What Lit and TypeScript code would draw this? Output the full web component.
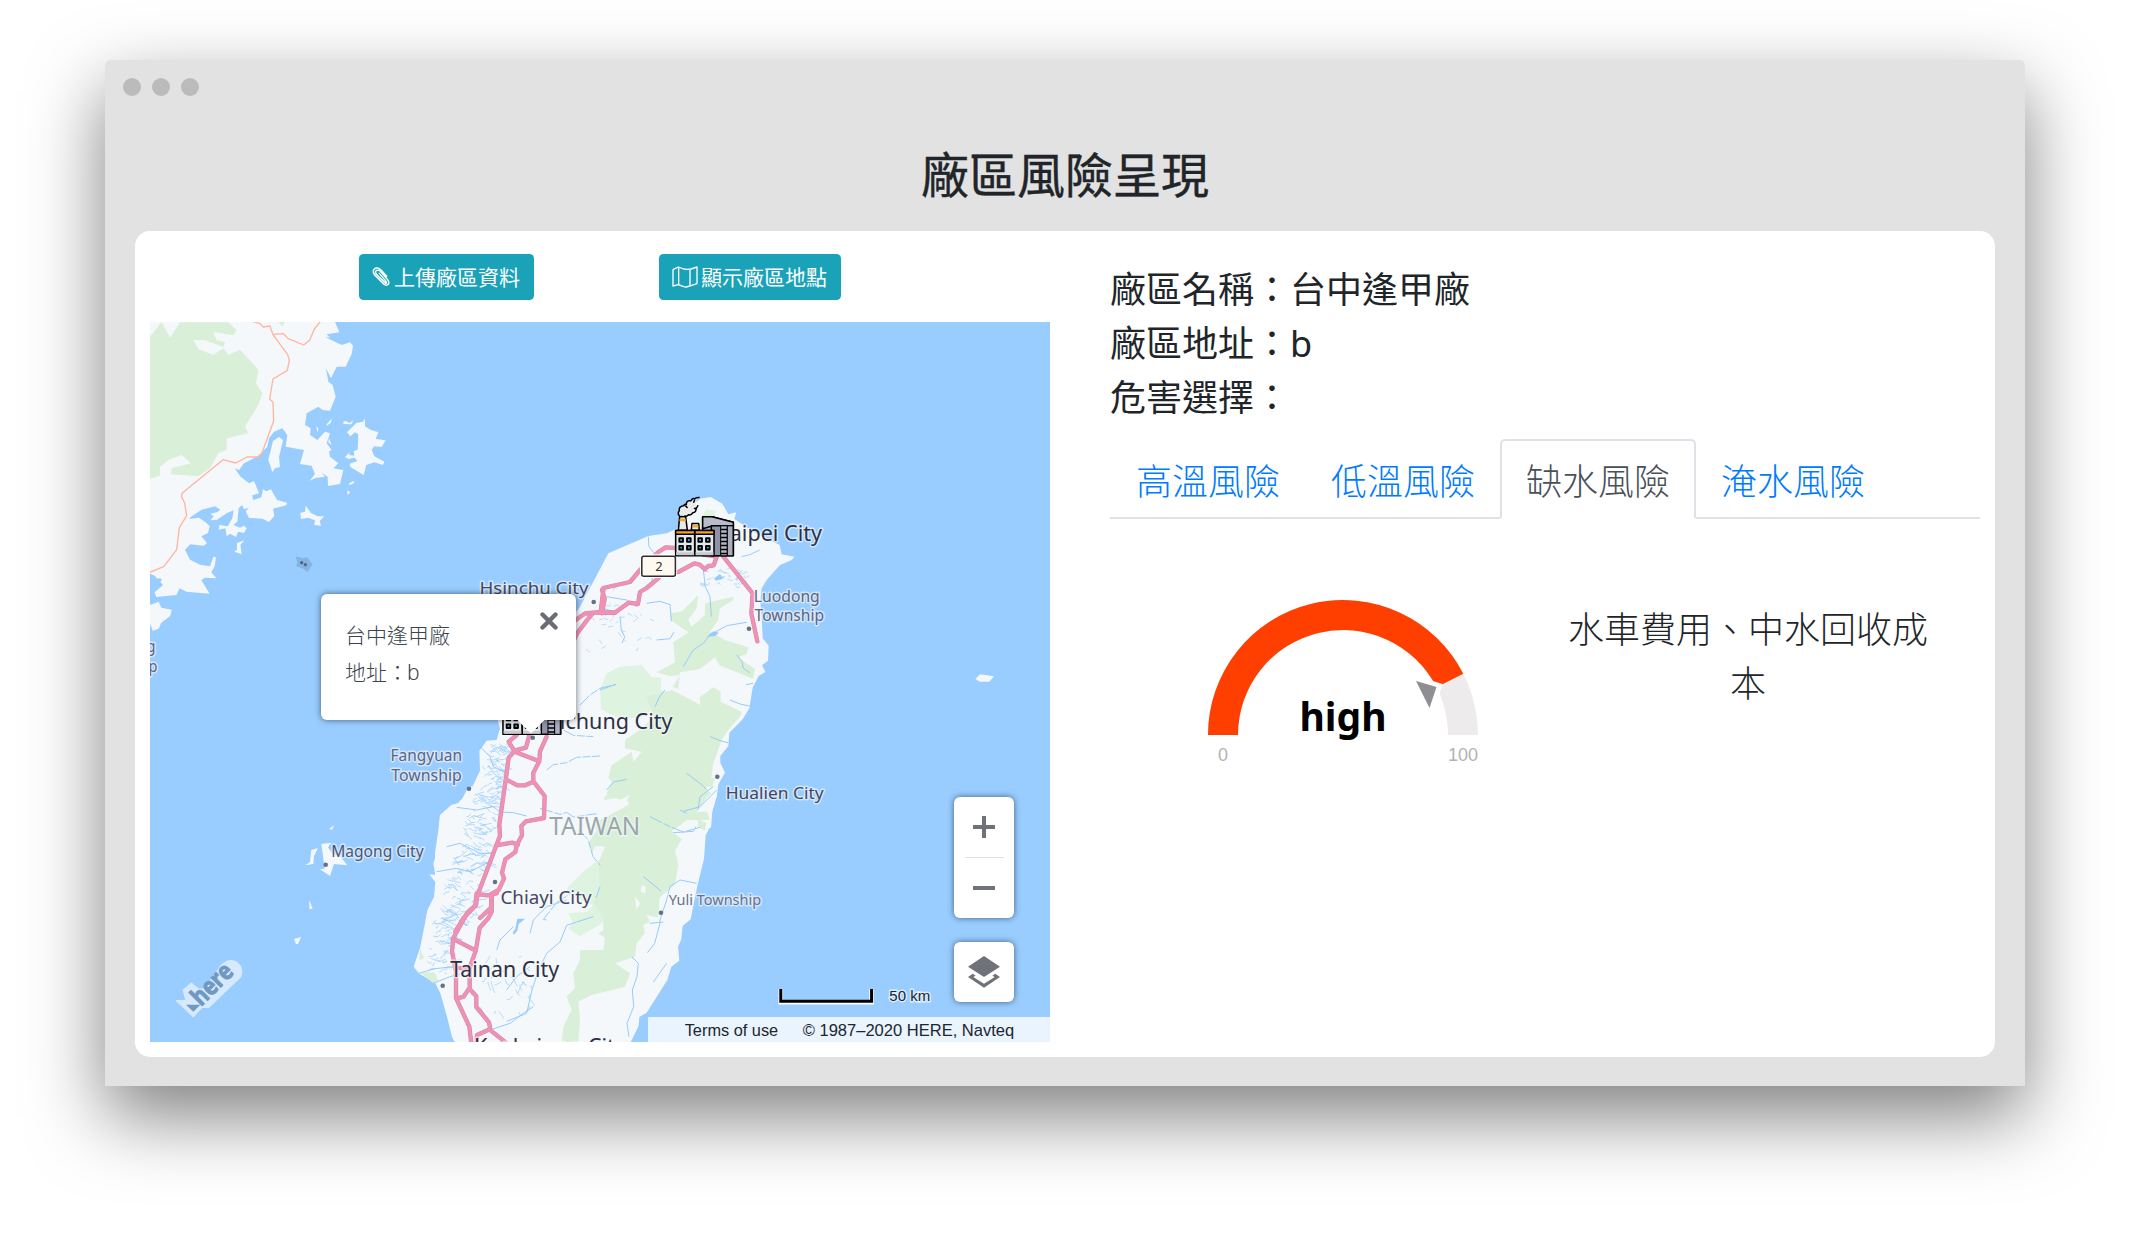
import { LitElement, html, svg, css } from "lit";
import { customElement, property, state } from "lit/decorators.js";

const SHEET = {
  nw: "translate(-5 -7) scale(.33333)",
  ne: "translate(450 128) scale(.33333)",
  mid: "translate(150 248) scale(.33333)",
  south: "translate(230 458) scale(.33333)",
};

const streamStrokes = (
  seed: number,
  count: number,
  place: (u: number, v: number) => [number, number],
  length: number,
  dirX: number,
  dirY: number
) => {
  let s = seed;
  const rnd = () => {
    s = (s * 16807) % 2147483647;
    return s / 2147483647;
  };
  let d = "";
  for (let i = 0; i < count; i++) {
    const [x, y] = place(rnd(), rnd());
    const l = length * (0.4 + rnd());
    const flip = rnd() > 0.6 ? -0.7 : 1;
    const dx = dirX * l * (0.4 + rnd() * 0.7);
    const dy = dirY * l * flip * (0.2 + rnd());
    const j = (rnd() - 0.5) * 14;
    d += `M${x.toFixed(0)} ${y.toFixed(0)}l${(dx / 2).toFixed(0)} ${(dy / 2 + j).toFixed(0)} ${(dx / 2).toFixed(0)} ${(dy / 2 - j).toFixed(0)}`;
  }
  return d;
};

const WEST_MID = streamStrokes(77, 230, (u, v) => {
  const y = 520 + v * 540;
  const left = 570 - v * 175;
  const right = 650 - v * 105;
  return [left + u * (right - left - 25), y];
}, 30, 1, 0.55);
const WEST_SOUTH = streamStrokes(911, 60, (u, v) => {
  const y = 360 + v * 220;
  const left = 165 - v * 30;
  return [left + u * 75, y];
}, 28, 1, -0.4);
const INLAND = streamStrokes(4242, 26, (u, v) => [850 + u * 200, 40 + v * 200], 30, 1, 0.7);
const NORTH = streamStrokes(333, 30, (u, v) => [300 + u * 160, 350 + v * 60], 24, 1, -0.3);
const SOUTH_IN = streamStrokes(1717, 30, (u, v) => [300 + u * 150, 520 + v * 190], 26, 0.6, 1);

const factory = svg`
  <g stroke="#000" stroke-width="4.6" stroke-linejoin="round">
    <path fill="#e9e9ea" d="M10 98l4-40h18l5 40z"/>
    <path fill="#f7a421" stroke="none" d="M14 64h18l1 7H13z"/>
    <path fill="#e9e9ea" d="M49 98l2-20h20l2 20z"/>
    <path fill="#f7a421" stroke="none" d="M52 83h18v7H52z"/>
    <path fill="#ecebec" stroke="none" d="M12 54L10 40l10-12 12-4 8-14 14-2 12-6-4 20-6 14-8 14-16 6-8-4z"/>
    <path fill="none" d="M14 56q-8-8-1-17q-2-12 12-14q4-6 9-4q0-14 14-11q4-10 12-6q2-5 14-4M69 23q-2 8-7 9q3 12-9 14q-3 8-13 6q-4 6-12 3M60 8q-5 3-3 8M29 25q7 1 8 7M66 33q-5 2-9-1"/>
    <path fill="#a9adbf" d="M83 58h28l64 16v100H83z"/>
    <path fill="#8b90a6" stroke="none" d="M119 86h18v86h-18z"/>
    <path fill="#b9bccb" d="M83 58h28l64 16v12H109l-26 8z"/>
    <path fill="#8e93a9" d="M109 85h66v90h-66z"/>
    <path fill="#b4b7c7" stroke-width="3" d="M137 85h20v90h-20z"/>
    <path fill="#a9adbf" stroke-width="3" d="M157 85h17v90h-17z"/>
    <path stroke-width="5" d="M137 96h20m-20 12h20m-20 12h20m-20 12h20m-20 12h20m-20 12h20m-20 12h20"/>
    <path fill="#e6e7eb" d="M2 99h57v76H2zM60 99h57v76H60z"/>
    <path fill="#f7a421" d="M2 99h57v11H2zM60 99h57v11H60z"/>
    <path fill="#c8cad3" stroke="none" d="M4 164h53v9H4zm58 0h53v9H62z"/>
    <path fill="#2aa7dc" stroke-width="5.5" d="M13 122h11v11H13zm23 0h11v11H36zM13 145h11v11H13zm23 0h11v11H36zM70 122h11v11H70zm23 0h11v11H93zM70 145h11v11H70zm23 0h11v11H93z"/>
  </g>`;

interface Label {
  t: string; x: number; y: number; s: number; w: number; c: string;
}

const LABELS: Label[] = [
  { t: "Hsinchu City", x: 329.5, y: 271.5, s: 17, w: 109, c: "#46475f" },
  { t: "Taipei City", x: 569.5, y: 219, s: 21.5, w: 102.5, c: "#2e2f42" },
  { t: "Taichung City", x: 387.5, y: 407, s: 21.5, w: 135, c: "#2e2f42" },
  { t: "Luodong", x: 603.8, y: 279.7, s: 15.5, w: 66, c: "#5f6480" },
  { t: "Township", x: 604.6, y: 299.3, s: 15.5, w: 69.5, c: "#5f6480" },
  { t: "Hualien City", x: 575.7, y: 477, s: 17, w: 98, c: "#46475f" },
  { t: "Fangyuan", x: 240.5, y: 439.3, s: 15.5, w: 71.5, c: "#5f6480" },
  { t: "Township", x: 241.3, y: 459.3, s: 15.5, w: 70.5, c: "#5f6480" },
  { t: "Magong City", x: 181.2, y: 535, s: 15.5, w: 92.5, c: "#4b5570" },
  { t: "TAIWAN", x: 399.3, y: 513.3, s: 26, w: 91, c: "#9ba6ab" },
  { t: "Chiayi City", x: 350.5, y: 582.3, s: 18, w: 91, c: "#46475f" },
  { t: "Yuli Township", x: 518.7, y: 583.3, s: 14.5, w: 92.5, c: "#6c7188" },
  { t: "Tainan City", x: 300.2, y: 655, s: 21.5, w: 109, c: "#2e2f42" },
  { t: "Kaohsiung City", x: 324, y: 732, s: 21.5, w: 152, c: "#2e2f42" },
  { t: "g", x: -3.5, y: 329.7, s: 15.5, w: 9, c: "#5f6480" },
  { t: "p", x: -1.5, y: 350, s: 15.5, w: 9, c: "#5f6480" },
];

const TOWN_DOTS: [number, number][] = [
  [443.7, 280], [599, 306.7], [567.3, 454.7], [319, 466.7], [175.7, 542.7],
  [345, 560], [511, 590.7], [292.7, 663.7], [382.7, 415.7],
];

@customElement("plant-map")
export class PlantMap extends LitElement {
  @property() name = "";
  @property() address = "";

  static styles = css`
    :host { display: block; position: relative; width: 900px; height: 720px; overflow: hidden; background: #99cdff; }
    .canvas { display: block; width: 900px; height: 720px; }
    .label { font-family: "Noto Sans", "Open Sans", sans-serif; paint-order: stroke; stroke: rgba(244, 248, 252, .6); stroke-width: 3px; stroke-linejoin: round; }
    .legal { font-family: "Liberation Sans", sans-serif; font-size: 17px; fill: #20262e; }
    .scale { font-family: "Liberation Sans", sans-serif; font-size: 15.5px; fill: #20262e; paint-order: stroke; stroke: rgba(255, 255, 255, .6); stroke-width: 3px; }
    .brand { font: 700 25px "Noto Sans", sans-serif; stroke: #7099c0; stroke-width: .9px; }
    .shield { font: 13px "Noto Sans", sans-serif; fill: #333; }
    .bubble { position: absolute; left: 171px; top: 271.5px; width: 255px; height: 126px; box-sizing: border-box; padding: 23px 24px; border-radius: 6px; background: #fff; box-shadow: 0 0 6px rgba(15, 22, 33, .6); color: #3c434b; font: 300 21px/37px "Noto Sans", "Noto Sans CJK TC", sans-serif; }
    .value { margin-left: -1px; }
    .tip { position: absolute; bottom: -14px; width: 30px; height: 15px; left: 195px; background: #fff; clip-path: polygon(0 0, 100% 0, 50% 100%); }
    .close { position: absolute; right: 18px; top: 18px; width: 18px; height: 18px; }
    .panel { position: absolute; left: 804px; width: 60px; border-radius: 6px; background: #fff; box-shadow: 0 0 6px rgba(15, 22, 33, .6); display: flex; flex-direction: column; align-items: center; }
    .zoom { top: 475px; height: 121px; }
    .layers { top: 620px; height: 60px; justify-content: center; }
    .step { flex: 1; display: grid; place-items: center; width: 39px; }
    .step + .step { border-top: 1px solid #dfe1e3; }
    .icon { display: block; }
  `;

  render() {
    return html`
      <svg class="canvas" viewBox="0 0 900 720">
        <rect width="900" height="720" fill="#99cdff" />
        <g transform=${SHEET.nw}>
          <path fill="#f4f8fb" d="M570 21l13 31-38 6 10 10-15-2 50 24 25-8 9 10-4 25-18 38-27 0-17 35-15-30 7 40 13 10 9 35-17 42-22-2-13-10-35 20-5 35 17 10-2 20 22 15 23-25 15 5-10 30 15 20-8 4 3 16 25 20-15 15 30 5-10 42-36 6-1-28-18-12 10 12-28 4-18 8 16-20-10-25-35-5 12-42-55-10 5-35-15-20-25 10-15 20-5 25-30 30-40 20-15 20-13-5 18 25 25 20 15-7 15 37-20 6 2 14 25-8 5-24 10 6 14-6 18 32 30 8-2 8-40 10 4 22-16 18-20-10-40-2-10-20 10-10-15 3-6-12-10 10-4 40-12 10 20 8 12-6 8 8-8 14-18-4-6 16-18-10-10 8-4-24-20 4 2-14 25 4 14-24 4-24-20 8-30 20-20 2 10-12-10-8 20-4 10-8-16-10-40 10-30 20-8 8 30-4 20 14 12 12-5 20-20 10 17 20-10 8-40-4-16 16 15 30 30 15 30 5 10-28 8 0-4 28-10 18 15 18-35-2-10 8 25 40-70-6-20-10-10 20-60 6-5-14 25-22-25-28-20-8V21z"/>
          <path fill="#99cdff" d="M18 790l8 12 14-12 12 2-14 20-14 4-9-6z"/>
          <path fill="#f4f8fb" d="M402 366l12 10-12 50 3 30-15 4-8 12-12-38 14-56zM595 320l8-2 10 6 12-8-6 12-24-1zM660 310l-6 10-20 4-28 28 10 12 14-12 10 6-2 46-12 4 2 14-16-2 2-8-14 14 10 6 18-4 10 10-24 8 2 10 40 24 8-30 24-8 26 8 4-10-22-12-8-4-8-20 8-10 22 2 12-20-30-4 8-20-24-8-16-10zM545 328l16-18-4 14-12 8zM514 335l6 4-2 14zM552 370l8 20-10-8zM612 505l16-8-2 8-12 6zM606 526l10 6-8 8zM482 572l16 22 20 10 20 0-14 14 4 14-20-2 2-14-20-8-22 4-2-18 14-4zM298 676l-12 14 4 28-22-8 8-6v-20zM15 870l26-10 8 18 31 6-4 18-28 22-6 16-18 8-9-22z"/>
          <path fill="#d9efd8" d="M15 65l35-44 10 19 15 28 30-46h145l25 24-10 15-60-10 10 25 25 5-5 15-55-20-35-2 15 28 45 18 30-20 15 20 35-16 15 16 40 44-7 41 19 30-12 35-40 65 10 20-65 15v35l-25 10-25 45-35 23-82-5 2-18 58-15-28-25-40 15-25 20v27l-30 10zM400 21h20l-8 14z"/>
          <path fill="none" stroke="#ffb59f" stroke-width="4" stroke-linejoin="round" d="M325 20l20 6 10 10 20-3 9 26 44 60 5 16-6 31-43 26-10 60 10 10 2 56-36 98-10 10h-34l-34 18-38-10-122 100-3 10 10 20 6 38-22 36-8 66-38 50-42 18M384 58l32-2 12 14 48 20 18-14 14-34 18-22"/>
          <path fill="#86b4e2" d="M452 724l20 5 14-3 17 22-16 23-12-10-22-8 4-10z"/>
          <circle cx="470" cy="743" r="5" fill="#59647e"/><circle cx="481" cy="749" r="5" fill="#59647e"/>
        </g>
        <g fill="#f4f8fb">
          <path transform=${SHEET.ne} d="M-150 700L-60 480-15 390 10 340l15-30 120-52 55-8 30-14 25-50 45-40 32-5 35 20 18 32 24-6-6 20 60 40 76 38 6 28 38 7-8 10-35 15-40 45-15 25-4 40 4 45 3 65 18 22-2 45-18 14 10 20-20 12-18 35-10 62-20 33-40 40-3 40-24 30v20l14 30-20 35-6 40-12 40-4 50H-150z"/>
          <path transform=${SHEET.mid} d="M920-40l-80 150-30 40-220 290 10 35-10 35-30 2-22 30 2 60-26 55-40 42-20 6-34 30-2 45-8 70-10 30 6 35-18-2 18 24-4 44-20 40-12 80h690V-40z"/>
          <path transform=${SHEET.south} d="M265 20l-30 60-55 25-5 45-10 70v65l-12 5 18 15-5 45-25 50-20 100-20 60 15 20 50 30 15 30 20 70 15 60 12 25h520l28-58 2-26 22-13 62-98 12-40 24-18-4-42 10-22 4-40 24-20 20-100 20-82 5-70 16-30 0-30 18-60 6-60z"/>
          <path transform=${SHEET.ne} d="M1126 687l14-14 42 6-14 16-28 0z"/>
          <path transform=${SHEET.mid} d="M88 776l14-10-6 14zM34 840l20-6-12 24-2 24-24 4 14-10zM64 822l30-4-10 14 14 20 20 4 24 30-40-4-12 36-30-20 14-2-4-30zM28 990l10 26-10 2zM38 934l14-4z"/>
          <path d="M144 617l7-2-3 7-2 0z"/>
        </g>
        <g fill="#d9efd8">
          <path transform=${SHEET.ne} fill="#dff4e0" d="M280 240l40-62 28 4-4 20-40 40zM0 720l20-50 40-20 65-5 30 35 30 4-2 36 20 10-30 30-40 40-70 8-60-30z"/>
          <path transform=${SHEET.ne} d="M210 490l35-5 50-50-5 40-25 35 10 20 40-35v-35l85-20v10l-40 25-5 35-25 35 45 25 70 22-5 20-25 10 20 15 30 20-5 30-60-25-40-15-15-25-45 35-60 10-5 50-25-10-5-30-35-10 55-30-5-60 45-30-50-35zM140 740l75-20 50 25 35 20v-25l40-28 22 13v30l63 30-5 15-35 40-20 30-25 70-10 70-30 0 10 10 25 10-55 45 10 10h30l10 25H80l5-45 25-5-65-15-35 5 30-50-15-15 10-40 60-40 5 30 25-30-50-10v-25l45-30 40-40z"/>
          <path transform=${SHEET.south} fill="#dff4e0" d="M655 240l-40 30-55 55 50 38 30 12-20 20-55 5 15 30-15 15 35 24 60-35 120-120z"/>
          <path transform=${SHEET.south} d="M705-10l-25 50 65 5v30l-65 35-40 20 10 20-25 40 10 30 12-22 28 2-20 50 5 80-20 40 30 40v40l-15 10 20 15-5 35h-70v30l-20 40 5 45-25 25 15 40-25 50-5 46h50l5-66-5-55 40-20 100-25 15-40-45-30 60-20 5-40 25-30-5-25 20-10-10-20 35 8 4-60 46-40 10-60-10-40 20-35-30-25 70-50 35-50 5-20-20-40z"/>
          <path transform=${SHEET.south} d="M953 118l26 10-4 24-20-10zM120 505l12 30-14 6zM100 560l15 16 50 2 10 26-15 6zM975-5l30 0-10 30z"/>
        </g>
        <g fill="#f4f8fb">
          <path transform=${SHEET.south} d="M785 315l12 6-2 20-12-6zM850 370l10-10-6 40zM765 350l16 20-12 20z"/>
          <path transform=${SHEET.mid} d="M1090 320l50-5-30 50zM960 690l30-16-20 36z"/>
        </g>
        <g fill="none" stroke="#96cbfc" stroke-width="3" stroke-linejoin="round">
          <path transform=${SHEET.mid} stroke-width="2" d="${WEST_MID}"/>
          <path transform=${SHEET.south} stroke-width="2" d="${WEST_SOUTH}"/>
          <path transform=${SHEET.mid} stroke-width="1.8" stroke-dasharray="16 12" d="${INLAND}"/>
          <path transform=${SHEET.ne} stroke-width="2" stroke-dasharray="18 8" d="${NORTH}"/>
          <path transform=${SHEET.south} stroke-width="2" d="${SOUTH_IN}"/>
          <path transform=${SHEET.mid} d="M840 405l30-30 30-20 48-12M790 480l30 16 60 4M740 600l20-16 40-6 30-16 70-4M720 715l60 18 20-6 20 14 70-10M835 780l30 30 14 50 22 26M1050 740l60 30 40 16 50-14M740 1050l-10-2 40-50 30-20 30-20" stroke-dasharray="40 5 24 4"/>
          <path transform=${SHEET.mid} d="M470 712l60 8 50-10 20 16 40 2 40 10M530 520l40 40 10 30 40 20M440 830l40-10 60 30 40 0M410 905l60-10 40 10 60-30"/>
          <path transform=${SHEET.ne} d="M20 440l60 10 30 20M145 260l2 30 16 20-2 60-10 40-30 20M60 500l4 40 10 20-8 20M140 460l40-6 30 10 4 50M170 570l40-4 12-20M310 360l6 50 14 30 4 60M425 320l24-6 30-14M250 650l30-50 30-20 20-25 50-28 60-10M410 615l16 20 4 20 20 14M460 700l-22 4M390 750l30 12 28 6M330 860l30 12 24 6M0 720l46-16M165 770l14-30 16-20M20 1020l20-24 40-8M260 970l40 30 20 18M350 1020l-50 50-50 14M40 500l-2-16-30-10"/>
          <path transform=${SHEET.south} d="M950 310l-50-10-30 20-10 40-20 60 0 10-16 60-22 28M810 430l40-4M755 530l20 20-4 40-14 40 4 50-20 50 6 40M1000 20l-40 30-6 40M880 158l60-4 8-14M790 290l30 24 24 20M660 320l-12 34M640 410l-50 16-30 10-20 50-40 34-24 50-20 60-16 70-60 24M350 510l10-30 40-40M115 580l50-14 60-6M160 610l50-20 30-8M330 750l60-20 40-30 30-20M860 550l-40 56M450 560l-40 30-30 40M560 360l-60 20-40 40-10 40M920 100l-20-10"/>
          <path transform=${SHEET.south} fill="#96cbfc" stroke="none" d="M412 416l24 0-20 16-4 20-10 12-4-6 8-12zM320 560l4 4-6 10z"/>
          <path transform=${SHEET.ne} fill="#96cbfc" stroke="none" d="M320 560l20-16 16 4-10 10zM344 384l16-12 6 8 10-2-10 10-20 4z"/>
        </g>
        <g fill="none" stroke="#d883a6" stroke-width="13" stroke-linejoin="round" stroke-linecap="round">${this.roads()}</g>
        <g fill="none" stroke="#ee92b5" stroke-width="10" stroke-linejoin="round" stroke-linecap="round">${this.roads()}</g>
        <g fill="#667089">${TOWN_DOTS.map(([x, y]) => svg`<circle cx=${x} cy=${y} r="2.3"/>`)}</g>
        ${LABELS.map(
          (l) => svg`<text class="label" x=${l.x} y=${l.y} font-size=${l.s} fill=${l.c} textLength=${l.w} lengthAdjust="spacingAndGlyphs">${l.t}</text>`
        )}
        <rect x="490" y="232.3" width="37" height="23.8" rx="3" fill="#fff"/>
        <rect x="491.8" y="234.2" width="33.6" height="20" rx="2" fill="#fdf8f0" stroke="#2f2b2b" stroke-width="1.5"/>
        <text class="shield" x="509" y="249" text-anchor="middle">2</text>
        <g transform="translate(525 175.5) scale(.3333)">${factory}</g>
        <g transform="translate(352.3 354) scale(.3333)">${factory}</g>
        <g transform="translate(-10 608) scale(.33333)">
          <path fill="#d6e9fe" stroke="#d6e9fe" stroke-linejoin="round" stroke-width="4" d="M110 212h28l-8-32 24-20 22 18 20-2 46-68q24-26 50-10q20 18 10 42l-96 92h-20l-26 28z"/>
          <path fill="#7099c0" d="M138 224h43l-21 21z"/>
          <text class="brand" transform="translate(187 227) rotate(-45) scale(3)" x="-2" y="0" textLength="48" lengthAdjust="spacingAndGlyphs" fill="#7099c0">here</text>
        </g>
        <path fill="none" stroke="#fff" stroke-width="4.6" d="M630.8 667v13.2h90.8V667"/>
        <path fill="none" stroke="#000" stroke-width="3" d="M630.8 667v12.2h90.8V667"/>
        <text class="scale" x="739.3" y="678.5" textLength="41" lengthAdjust="spacingAndGlyphs">50 km</text>
        <rect x="498" y="695" width="402" height="25" fill="#eaf4ff"/>
        <text class="legal" x="534.7" y="713.5" textLength="93.5" lengthAdjust="spacingAndGlyphs">Terms of use</text>
        <text class="legal" x="652.7" y="713.5" textLength="211.5" lengthAdjust="spacingAndGlyphs">© 1987–2020 HERE, Navteq</text>
      </svg>
      <div class="bubble">
        <div>${this.name}</div>
        <div>地址：<span class="value">${this.address}</span></div>
        <svg class="close" viewBox="0 0 18 18"><path d="M2.5 2.5l13 13m0-13l-13 13" stroke="#6a6d74" stroke-width="4.4" stroke-linecap="round"/></svg>
        <span class="tip"></span>
      </div>
      <div class="panel zoom">
        <div class="step"><svg class="icon" width="22" height="22"><path d="M11 0v22M0 11h22" stroke="#6f7379" stroke-width="4"/></svg></div>
        <div class="step"><svg class="icon" width="22" height="22"><path d="M0 11h22" stroke="#6f7379" stroke-width="4"/></svg></div>
      </div>
      <div class="panel layers">
        <svg class="icon" width="32" height="32" viewBox="0 0 96 96" fill="#6f7379">
          <path d="M48 0l48 32-48 31L0 32z"/><path d="M14 53l9 6-7 4 32 20 32-20-7-4 9-6 14 10-48 32L0 63z"/>
        </svg>
      </div>
    `;
  }

  private roads() {
    return svg`
      <path transform=${SHEET.ne} d="M225 294l-28-2-22 14-55 54-30 36-80 18-2 12 6 20-8 44M0 488h44l42-30 28 4 6-36 20-12 38-32M235 366l48-26 16 4 16 14 10-10 16-2 10-28M310 314l30 4M370 320l88 110-4 60 18 84"/>
      <path transform=${SHEET.mid} d="M906 60l4 0-8 66-46 4-34 24M945 128l-65 0-20 24-30 40-8 18M650 495l-24 20 18 30 72 28M688 495l-10 38-32 8-20 22-8 60-20 140 2 34-68 180-4 28-38 40-24 40M740 500l-20 44 -2 30-18 34v26l34 44-2 66-54 10-14 14 2 28-16 30-4 20-30 22-10 40 6 18-16 34-22 12 0 40-34 32M618 628l34 18h24l22-10M588 826l48-8 18 6M532 972l30 4 28-6"/>
      <path transform=${SHEET.south} d="M290 340l-4 36-24 22-42 76-4 40 12 60 0 80 40 86 6 50M335 345l0 50-10 20-26 28-12 70-18 50 0 64 20 22 0 32 38 46 4 20-40 18-2 30M222 478l62 32M226 562l44 6M230 655l20-4 18-26M328 748l50 40"/>`;
  }
}

@customElement("risk-gauge")
export class RiskGauge extends LitElement {
  @property({ type: Number }) value = 85;
  @property() level = "high";

  static styles = css`
    :host { display: block; }
    .dial { display: block; }
    .level { font: 700 39px "Noto Sans", sans-serif; }
    .bound { font: 18px "Liberation Sans", sans-serif; fill: #b3b3b3; }
  `;

  private arc(from: number, to: number) {
    const p = (r: number, v: number) => {
      const a = Math.PI * (1 - v / 100);
      return `${(140 + r * Math.cos(a)).toFixed(2)} ${(140 - r * Math.sin(a)).toFixed(2)}`;
    };
    return `M${p(135, from)}A135 135 0 0 1 ${p(135, to)}L${p(105, to)}A105 105 0 0 0 ${p(105, from)}Z`;
  }

  render() {
    return html`<svg class="dial" width="280" height="180">
      <path fill="#edebeb" d=${this.arc(0, 100)} />
      <path fill="#ff3f00" d=${this.arc(0, this.value)} />
      <path fill="#fff" d="M207 77l22.7 9 9.8 3-2.9 10.3-9.6 21z" />
      <path fill="#8e8e93" d="M213 86l20.5 6-7 21z" />
      <text class="level" x="140" y="136" text-anchor="middle">${this.level}</text>
      <text class="bound" x="20" y="166" text-anchor="middle">0</text>
      <text class="bound" x="260" y="166" text-anchor="middle">100</text>
    </svg>`;
  }
}

@customElement("app-root")
export class AppRoot extends LitElement {
  @state() private active = 2;
  private tabs = ["高溫風險", "低溫風險", "缺水風險", "淹水風險"];
  private plant = { name: "台中逢甲廠", address: "b" };

  static styles = css`
    :host { display: block; box-sizing: border-box; height: 1236px; padding: 60px 105px 0; overflow: hidden; background: #fff; color: #212529; font-family: "Noto Sans", "Noto Sans CJK TC", sans-serif; }
    .window { box-sizing: border-box; height: 1026px; padding: 18px 30px 0; border-radius: 6px 6px 0 0; background: #e2e2e2; box-shadow: 0 30px 74px rgba(0, 0, 0, .5); }
    .lights { display: flex; gap: 11px; height: 18px; margin-left: -12px; }
    .light { width: 18px; height: 18px; border-radius: 50%; background: #bbb; }
    .title { margin: 0; height: 135px; padding-top: 43px; box-sizing: border-box; text-align: center; font-size: 48px; line-height: 72px; font-weight: 400; -webkit-text-stroke: .4px #212529; }
    .card { box-sizing: border-box; display: flex; height: 826px; padding: 0 15px; border-radius: 15px; background: #fff; }
    .left { width: 900px; }
    .actions { display: flex; height: 91px; box-sizing: border-box; padding: 23px 0 22px 209px; gap: 125px; }
    .button { display: flex; align-items: center; gap: 3px; box-sizing: border-box; height: 46px; padding: 0 14px 2px 13px; border: 0; border-radius: 4.5px; background: #19a2b8; color: #fff; font: 400 21px/30px "Noto Sans CJK TC", sans-serif; white-space: nowrap; }
    .button svg { flex: none; position: relative; top: 1px; }
    .right { width: 870px; margin-left: 60px; padding-top: 32px; }
    .facts { height: 176px; font-size: 36px; line-height: 54px; }
    .tabs { display: flex; box-sizing: border-box; height: 80px; border-bottom: 2px solid #dee2e6; }
    .tab { box-sizing: border-box; height: 80px; padding: 14px 24px 10px; border: 2px solid transparent; border-radius: 5px 5px 0 0; color: #007bff; font-weight: 300; font-size: 36px; line-height: 54px; white-space: nowrap; margin-right: -1px; }
    .tab.on { border-color: #dee2e6 #dee2e6 #fff; background: #fff; color: #495057; }
    .result { display: flex; padding: 76px 0 0 93px; }
    .note { width: 394px; margin-left: 68px; padding-top: 8px; text-align: center; font-weight: 300; font-size: 36px; line-height: 54px; }
  `;

  render() {
    return html`
      <main class="window">
        <div class="lights"><i class="light"></i><i class="light"></i><i class="light"></i></div>
        <h1 class="title">廠區風險呈現</h1>
        <section class="card">
          <div class="left">
            <div class="actions">
              <button class="button">
                <svg width="19" height="20" viewBox="0 0 57 60"><path fill="none" stroke="#fff" stroke-width="4.2" stroke-linecap="round" d="M22 19L42 43q4 7-1 6L13 22q-5-8 0-11q6-4 12 2L47 38q6 9 2 14q-6 6-14-1L8 24Q0 12 7 6q9-7 21 4L44 28"/></svg>
                上傳廠區資料
              </button>
              <button class="button">
                <svg width="26" height="22" viewBox="0 0 78 66"><path fill="none" stroke="#fff" stroke-width="4" stroke-linejoin="round" d="M3 11L19 3l16 6 8 1L57 9l18-6v50l-18 6-14 4-8-1-16-6L3 60zM20 4v50M54 10v50" /></svg>
                顯示廠區地點
              </button>
            </div>
            <plant-map .name=${this.plant.name} .address=${this.plant.address}></plant-map>
          </div>
          <div class="right">
            <div class="facts">
              <div>廠區名稱：${this.plant.name}</div>
              <div>廠區地址：${this.plant.address}</div>
              <div>危害選擇：</div>
            </div>
            <nav class="tabs">
              ${this.tabs.map(
                (t, i) => html`<a class="tab ${i === this.active ? "on" : ""}" @click=${() => (this.active = i)}>${t}</a>`
              )}
            </nav>
            <div class="result">
              <risk-gauge></risk-gauge>
              <div class="note">水車費用、中水回收成本</div>
            </div>
          </div>
        </section>
      </main>
    `;
  }
}
